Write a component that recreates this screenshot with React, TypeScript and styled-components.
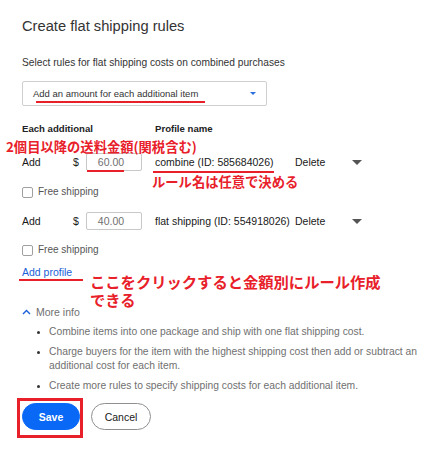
import React from "react";
import styled, { createGlobalStyle } from "styled-components";

const Global = createGlobalStyle`
  html, body { margin: 0; padding: 0; background: #fff; }
  body { font-family: "Liberation Sans", Arial, sans-serif; color: #191919; }
`;

const Page = styled.div`
  position: relative;
  width: 438px;
  height: 455px;
  padding: 16px 0 0 22px;
  box-sizing: border-box;
  display: flex;
  flex-direction: column;
  align-items: flex-start;
`;

const Title = styled.h1`
  margin: 0;
  font-size: 14.7px;
  line-height: 20px;
  font-weight: 400;
  color: #333;
`;

const Subtitle = styled.p`
  margin: 20px 0 0;
  font-size: 10.2px;
  line-height: 14px;
  color: #333;
`;

const Select = styled.div`
  margin-top: 11px;
  width: 245px;
  height: 25px;
  box-sizing: border-box;
  border: 1px solid #cfcfcf;
  border-radius: 2px;
  display: flex;
  align-items: center;
  justify-content: space-between;
  padding: 0 10px 0 10px;
  font-size: 9.5px;
  color: #333;
`;

const Caret = styled.span`
  width: 0;
  height: 0;
  border-left: 3px solid transparent;
  border-right: 3px solid transparent;
  border-top: 3px solid #2a6fdb;
`;

const Grid = styled.div<{ $top: number }>`
  margin-top: ${(p) => p.$top}px;
  display: grid;
  grid-template-columns: 51px 13px 69px 140px 57px 11px;
  align-items: center;
  font-size: 10.5px;
  color: #191919;
`;

const Header = styled.div<{ $span: number }>`
  grid-column: span ${(p) => p.$span};
  font-size: 9.6px;
  font-weight: 700;
  line-height: 14px;
  color: #222;
`;

const Cell = styled.div`
  line-height: 18px;
  white-space: nowrap;
`;

const Input = styled.div`
  width: 56px;
  height: 18px;
  box-sizing: border-box;
  border: 1px solid #c8c8c8;
  border-radius: 2px;
  display: flex;
  align-items: center;
  justify-content: center;
  padding-right: 6px;
  font-size: 10.5px;
  color: #707070;
`;

const Tri = styled.span`
  width: 0;
  height: 0;
  border-left: 5.5px solid transparent;
  border-right: 5.5px solid transparent;
  border-top: 5px solid #555;
`;

const Check = styled.label<{ $top: number }>`
  margin-top: ${(p) => p.$top}px;
  display: flex;
  align-items: center;
  gap: 5px;
  font-size: 10px;
  line-height: 14px;
  color: #555;
`;

const Box = styled.span`
  width: 11px;
  height: 11px;
  box-sizing: border-box;
  border: 1px solid #a0a0a0;
  border-radius: 2px;
`;

const Link = styled.a`
  margin-top: 8px;
  font-size: 10.5px;
  line-height: 14px;
  color: #1a5fd8;
  text-decoration: none;
`;

const More = styled.div`
  margin-top: 26px;
  display: flex;
  align-items: center;
  gap: 5px;
  font-size: 10.5px;
  line-height: 14px;
  color: #707070;
`;

const List = styled.ul`
  margin: 6px 0 0;
  padding: 0 0 0 27px;
  width: 416px;
  box-sizing: border-box;
  font-size: 10.3px;
  line-height: 14px;
  color: #707070;
  display: flex;
  flex-direction: column;
  gap: 6px;
  li::marker { color: #333; font-size: 9px; }
`;

const Buttons = styled.div`
  margin-top: 10px;
  display: flex;
  gap: 11px;
`;

const Btn = styled.button<{ $primary?: boolean }>`
  height: 27px;
  width: ${(p) => (p.$primary ? 58 : 60)}px;
  border-radius: 14px;
  font-family: "Liberation Sans", Arial, sans-serif;
  font-size: 10.5px;
  font-weight: ${(p) => (p.$primary ? 700 : 400)};
  color: ${(p) => (p.$primary ? "#fff" : "#191919")};
  background: ${(p) => (p.$primary ? "#0968f6" : "#fff")};
  border: 1px solid ${(p) => (p.$primary ? "#0968f6" : "#8f8f8f")};
  padding: 0;
`;

const Note = styled.div<{ $x: number; $y: number; $size: number }>`
  position: absolute;
  left: ${(p) => p.$x}px;
  top: ${(p) => p.$y}px;
  font-family: "Noto Sans CJK JP", sans-serif;
  font-size: ${(p) => p.$size}px;
  line-height: ${(p) => Math.round(p.$size * 1.15)}px;
  font-weight: 700;
  color: #e8202a;
  white-space: nowrap;
`;

const Mark = styled.div<{ $x: number; $y: number; $w: number }>`
  position: absolute;
  left: ${(p) => p.$x}px;
  top: ${(p) => p.$y}px;
  width: ${(p) => p.$w}px;
  height: 2px;
  background: #e8202a;
`;

const Frame = styled.div`
  position: absolute;
  left: 17px;
  top: 398px;
  width: 66px;
  height: 40px;
  box-sizing: border-box;
  border: 3px solid #e8202a;
`;

const Chevron = () => (
  <svg width="9" height="6" viewBox="0 0 9 6">
    <path d="M1 5 L4.5 1.5 L8 5" fill="none" stroke="#1a5fd8" strokeWidth="1.4" />
  </svg>
);

const rows = [
  { amount: "60.00", name: "combine (ID: 585684026)" },
  { amount: "40.00", name: "flat shipping (ID: 554918026)" },
];

export default function App() {
  return (
    <Page>
      <Global />
      <Title>Create flat shipping rules</Title>
      <Subtitle>Select rules for flat shipping costs on combined purchases</Subtitle>
      <Select>
        <span>Add an amount for each additional item</span>
        <Caret />
      </Select>
      <Grid $top={16}>
        <Header $span={3}>Each additional</Header>
        <Header $span={3}>Profile name</Header>
      </Grid>
      {rows.map((r, i) => (
        <React.Fragment key={r.name}>
          <Grid $top={i === 0 ? 17 : 13}>
            <Cell>Add</Cell>
            <Cell>$</Cell>
            <Input>{r.amount}</Input>
            <Cell>{r.name}</Cell>
            <Cell>Delete</Cell>
            <Tri />
          </Grid>
          <Check $top={i === 0 ? 14 : 13}>
            <Box />
            Free shipping
          </Check>
        </React.Fragment>
      ))}
      <Link>Add profile</Link>
      <More>
        <Chevron />
        More info
      </More>
      <List>
        <li>Combine items into one package and ship with one flat shipping cost.</li>
        <li>Charge buyers for the item with the highest shipping cost then add or subtract an additional cost for each item.</li>
        <li>Create more rules to specify shipping costs for each additional item.</li>
      </List>
      <Buttons>
        <Btn $primary>Save</Btn>
        <Btn>Cancel</Btn>
      </Buttons>

      <Mark $x={36} $y={101} $w={169} />
      <Note $x={6} $y={139} $size={13.3}>2個目以降の送料金額(関税含む)</Note>
      <Mark $x={87} $y={170} $w={37} />
      <Mark $x={153} $y={171} $w={121} />
      <Note $x={152} $y={174} $size={13.3}>ルール名は任意で決める</Note>
      <Mark $x={19} $y={279} $w={64} />
      <Note $x={90} $y={272} $size={15.3}>ここをクリックすると金額別にルール作成<br />できる</Note>
      <Frame />
    </Page>
  );
}
